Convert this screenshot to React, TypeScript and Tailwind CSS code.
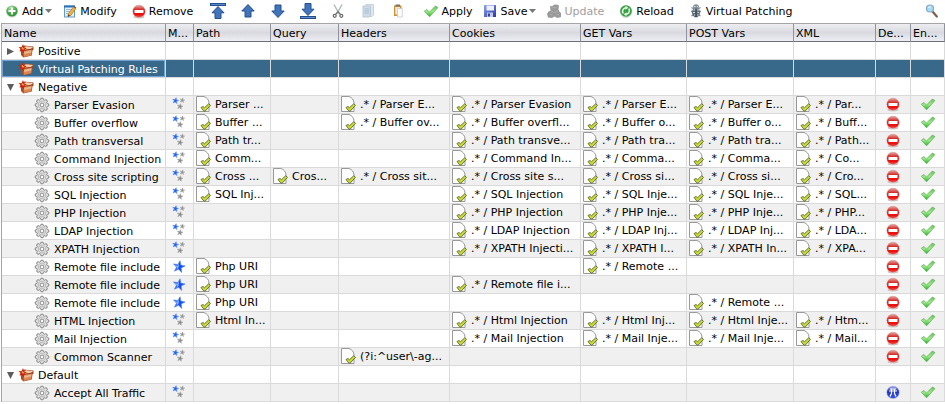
import type { ReactNode } from 'react';

/* ---------- icons ---------- */

function AddIcon() {
  return (
    <svg className="size-4 shrink-0" viewBox="0 0 16 16" aria-hidden="true">
      <defs>
        <radialGradient id="add-fill" cx="40%" cy="20%" r="85%">
          <stop offset="0" stopColor="#b4e0ac" />
          <stop offset="0.5" stopColor="#4fb04f" />
          <stop offset="1" stopColor="#2b8a33" />
        </radialGradient>
      </defs>
      <circle cx="8" cy="8.6" r="6.2" fill="#dfe3df" />
      <circle cx="8" cy="8" r="5.6" fill="url(#add-fill)" />
      <path d="M7 4.500h2V7h2.500v2H9v2.500H7V9H4.500V7H7z" fill="#fff" />
    </svg>
  );
}

function ModifyIcon() {
  return (
    <svg className="size-4 shrink-0" viewBox="0 0 16 16" aria-hidden="true">
      <rect x="2.5" y="3" width="10" height="11" fill="#e4effa" stroke="#5f9bd0" />
      <path d="M2 3.500h11" stroke="#2f6fb5" strokeWidth="2" />
      <path d="M4 6.500h6M4 8.500h4M4 10.500h3" stroke="#9db9d6" />
      <path d="M11.500 4l2.300 1.600-5 6.800-2.800 1.200.4-3z" fill="#f2b53c" stroke="#a8742a" strokeWidth="0.7" />
      <path d="M6.300 11.500l1.600 1.200-2.200 1z" fill="#3a3024" />
      <path d="M11.500 4l2.300 1.600.6-1-2.200-1.600z" fill="#8a5a3c" />
    </svg>
  );
}

function StopIcon() {
  return (
    <svg className="size-4 shrink-0" viewBox="0 0 16 16" aria-hidden="true">
      <defs>
        <linearGradient id="stop-fill" x1="0" y1="0" x2="0" y2="1">
          <stop offset="0" stopColor="#e9a5a2" />
          <stop offset="0.35" stopColor="#d4302c" />
          <stop offset="0.75" stopColor="#ea0c0c" />
          <stop offset="1" stopColor="#f4584e" />
        </linearGradient>
      </defs>
      <ellipse cx="8" cy="13.8" rx="5.5" ry="1.6" fill="#c8c8c8" />
      <circle cx="8" cy="8.3" r="6.6" fill="#d3b3b1" />
      <circle cx="8" cy="8.3" r="6" fill="url(#stop-fill)" />
      <rect x="3.500" y="7" width="9" height="3" rx="0.5" fill="#fff" />
    </svg>
  );
}

function ArrowIcon({ down = false, bar = false }: { down?: boolean; bar?: boolean }) {
  return (
    <svg className={down ? 'size-4 shrink-0 rotate-180' : 'size-4 shrink-0'} viewBox="0 0 16 16" aria-hidden="true">
      {bar ? (
        <>
          <rect x="0.500" y="0.500" width="15" height="2" fill="#5a8acb" stroke="#234f8e" />
          <path d="M8 3.500l6 6.300h-3V15.500H5V9.800H2z" fill="#4274ba" stroke="#234f8e" strokeLinejoin="round" />
        </>
      ) : (
        <path d="M8 1.500l6.200 6.500H11v6H5V8H1.800z" fill="#4274ba" stroke="#234f8e" strokeLinejoin="round" />
      )}
    </svg>
  );
}

function CutIcon() {
  return (
    <svg className="size-4 shrink-0" viewBox="0 0 16 16" aria-hidden="true">
      <path d="M4 1.500l5.200 9.500M12 1.500L6.800 11" stroke="#b3baba" strokeWidth="1.500" />
      <circle cx="4.700" cy="12.800" r="1.500" fill="none" stroke="#666" strokeWidth="1.200" />
      <circle cx="11.300" cy="12.800" r="1.500" fill="none" stroke="#666" strokeWidth="1.200" />
      <path d="M5.500 11.500L8 8.500l2.500 3" fill="none" stroke="#777" strokeWidth="1.200" />
    </svg>
  );
}

function CopyIcon() {
  return (
    <svg className="size-4 shrink-0" viewBox="0 0 16 16" aria-hidden="true">
      <path d="M6 1.500h7.500V12L12 13.500H6z" fill="#dfe8ef" stroke="#c6d3dd" />
      <path d="M3 3h7.500v9.500L9 14H3z" fill="#cfdce6" stroke="#b9c9d5" />
      <path d="M4.500 5H9v6H4.500z" fill="#b9cddc" />
    </svg>
  );
}

function PasteIcon() {
  return (
    <svg className="size-4 shrink-0" viewBox="0 0 16 16" aria-hidden="true">
      <path d="M4 2.500h7.500V13H4z" fill="#cf9136" />
      <path d="M5.300 4h4.700v7.500H5.300z" fill="#f4ead8" />
      <rect x="5.500" y="1.500" width="4.500" height="2" fill="#7b7468" />
      <path d="M7.500 5.500h4.800V14H7.500z" fill="#fdfdfd" stroke="#c9c9c9" strokeWidth="0.800" />
    </svg>
  );
}

function CheckIcon() {
  return (
    <svg className="size-4 shrink-0" viewBox="0 0 16 16" aria-hidden="true">
      <defs>
        <linearGradient id="check-fill" x1="0" y1="0" x2="0" y2="1">
          <stop offset="0" stopColor="#62c455" />
          <stop offset="0.500" stopColor="#9aec86" />
          <stop offset="1" stopColor="#22b020" />
        </linearGradient>
      </defs>
      <path
        d="M1.300 8.200L3.800 6.500 6.500 9 12.500 3 14.900 4.600 6.600 13.800z"
        fill="url(#check-fill)"
        stroke="#63a85c"
        strokeWidth="0.700"
        strokeLinejoin="round"
      />
    </svg>
  );
}

function SaveIcon() {
  return (
    <svg className="size-4 shrink-0" viewBox="0 0 16 16" aria-hidden="true">
      <defs>
        <linearGradient id="save-fill" x1="0" y1="0" x2="1" y2="1">
          <stop offset="0" stopColor="#8ba3ee" />
          <stop offset="1" stopColor="#2a35a8" />
        </linearGradient>
      </defs>
      <rect x="2" y="2" width="12" height="12" rx="0.500" fill="url(#save-fill)" />
      <rect x="4.500" y="2.500" width="7.500" height="5" fill="#eef1fb" />
      <rect x="5" y="9.500" width="6" height="4.500" fill="#c4cbe8" />
      <rect x="6" y="10.500" width="2" height="3" fill="#3542a5" />
    </svg>
  );
}

function UpdateIcon() {
  return (
    <svg className="size-4 shrink-0" viewBox="0 0 16 16" aria-hidden="true">
      <path
        d="M4 3l2 .3L8.500 1.500l3 .3L13 2.500l-.500 4 .800 2L15 10v4l-3.500 1L8.500 13.500 6 15l-4-.500L1 11l1.500-2.500 2-.8z"
        fill="#999"
      />
      <path d="M6.500 4.500l4.500.3M5 8.500l3.500 1 3-1M4 11.500l2.500.6M10.500 11.500l2.500.3" stroke="#aeaeae" fill="none" />
    </svg>
  );
}

function ReloadIcon() {
  return (
    <svg className="size-4 shrink-0" viewBox="0 0 16 16" aria-hidden="true">
      <circle cx="8" cy="8.600" r="6.300" fill="#d3d8d3" />
      <circle cx="8" cy="8" r="5.800" fill="#35a045" />
      <path d="M5.300 10.500C3.600 8 5 5 8 4.800" fill="none" stroke="#e6f7e4" strokeWidth="1.500" />
      <path d="M10.700 5.500C12.400 8 11 11 8 11.200" fill="none" stroke="#e6f7e4" strokeWidth="1.500" />
      <path d="M7.500 2.800l2.800 2-2.800 2zM8.500 13.200l-2.800-2 2.800-2z" fill="#e6f7e4" />
    </svg>
  );
}

function PatchIcon() {
  return (
    <svg className="size-4 shrink-0" viewBox="0 0 16 16" aria-hidden="true">
      <path
        d="M3.500 4.500L6 6M12.500 4.500L10 6M3 8.500h2.500M13 8.500h-2.500M3.500 13L6 11.500M12.500 13L10 11.500"
        stroke="#7d8a91"
        strokeWidth="1.300"
      />
      <ellipse cx="8" cy="9.500" rx="4" ry="5" fill="#5f6f77" />
      <ellipse cx="8" cy="3.800" rx="3" ry="2.500" fill="#83939a" />
      <path d="M6 3.500h1.500M9 3.500h1M5.500 7h2M9 7h2M5 9.500h2M9.500 9.500h1.500M6 12h1.500M9 12h1.500" stroke="#cfd8dc" />
      <path d="M8 5.500v8.500" stroke="#323d43" />
    </svg>
  );
}

function SearchIcon() {
  return (
    <svg className="size-4 shrink-0" viewBox="0 0 16 16" aria-hidden="true">
      <path d="M10.500 8.500l4.300 5" stroke="#80604c" strokeWidth="2.200" strokeLinecap="round" />
      <circle cx="8" cy="5.500" r="3.500" fill="#a8dcf6" stroke="#84a9c4" strokeWidth="1.200" />
      <path d="M6.500 5a2 2 0 0 1 2-1.300" stroke="#fff" fill="none" />
    </svg>
  );
}

function PackageIcon() {
  return (
    <svg className="size-4 shrink-0" viewBox="0 0 16 16" aria-hidden="true">
      <path d="M2.500 4.500L6 2.500l9.500 1v3.300l-1 .5-.7 5.200-8.300 2L3 12z" fill="#a94c28" />
      <path d="M5.500 7.800l8.500-1.300-.7 5.700-7.500 1.800z" fill="#d98653" />
      <path d="M6.200 8.800l7-1.200-.2 1.800-6.700 1.500z" fill="#eeb78a" />
      <path d="M5.200 5.200L8 3.300l7 .6-1.800 1.800-7.500 1.400z" fill="#f2cfae" />
      <path d="M5.500 7.500l9.500-1.500" stroke="#8e3b1c" strokeWidth="0.700" />
      <path d="M.5 4l3 .3L5 1l1 3.200L8.800 5.600 6.300 7l-.5 3.500L4 8 1.500 8.500l1-2.500z" fill="#cb2416" />
      <path d="M3.200 5l1.500-1 .8 1.300 1.300.5-1.800.9z" fill="#f6a33a" />
    </svg>
  );
}

function GearIcon() {
  return (
    <svg className="size-4 shrink-0" viewBox="0 0 16 16" aria-hidden="true">
      <g fill="#dcdcdc" stroke="#858585">
        <circle cx="8" cy="2.700" r="1.600" />
        <circle cx="11.700" cy="4.300" r="1.600" />
        <circle cx="13.300" cy="8" r="1.600" />
        <circle cx="11.700" cy="11.700" r="1.600" />
        <circle cx="8" cy="13.300" r="1.600" />
        <circle cx="4.300" cy="11.700" r="1.600" />
        <circle cx="2.700" cy="8" r="1.600" />
        <circle cx="4.300" cy="4.300" r="1.600" />
      </g>
      <circle cx="8" cy="8" r="5" fill="#e6e6e6" />
      <circle cx="8" cy="8" r="3.800" fill="none" stroke="#b0b0b0" strokeWidth="0.800" />
      <circle cx="8" cy="8" r="1.900" fill="#fafafa" stroke="#8a8a8a" />
    </svg>
  );
}

const STAR = 'M0-5L1.300-1.600 4.900-1.500 2 .7 3.100 4.300 0 2.200-3.100 4.300-2 .7-4.900-1.500-1.300-1.600z';

function MatchAnyIcon() {
  return (
    <svg className="block size-4" viewBox="0 0 16 16" role="img" aria-label="Any match">
      <g strokeWidth="1">
        <path d={STAR} transform="translate(4.500 4.700) rotate(12) scale(.6)" fill="#1f62f5" stroke="#5b8cf5" />
        <path d={STAR} transform="translate(11.300 4.300) rotate(12) scale(.5)" fill="#8f8f8f" stroke="#b0b0b0" />
        <path d={STAR} transform="translate(9 10.500) rotate(12) scale(.58)" fill="#8a8a8a" stroke="#a8a8a8" />
      </g>
    </svg>
  );
}

function MatchAllIcon() {
  return (
    <svg className="block size-4" viewBox="0 0 16 16" role="img" aria-label="All match">
      <path d={STAR} transform="translate(8 8.700) rotate(10) scale(1.200)" fill="#1550ee" stroke="#5a86e6" strokeWidth="0.500" />
      <path d="M8.200 4.500L6.800 7.500 3.500 7.200l2.600 2.200-.9 2.800 2.300-2.400z" fill="#86b4ff" />
    </svg>
  );
}

function DocIcon() {
  return (
    <svg className="h-4 w-[15px] shrink-0" viewBox="0 0 15 16" aria-hidden="true">
      <path d="M.5.500h7.500C11 1.500 13 4 13 7v8.500H.5z" fill="#fdfdfd" stroke="#999" />
      <path
        d="M5 11.500l2-1 1.500 1.200 4.200-3.900 1.800 1.500-5.200 5.700L8 15.300z"
        fill="#c9dc30"
        stroke="#5d6a3a"
        strokeWidth="0.900"
        strokeLinejoin="round"
      />
    </svg>
  );
}

function AcceptIcon() {
  return (
    <svg className="size-4 shrink-0" viewBox="0 0 16 16" aria-hidden="true">
      <defs>
        <linearGradient id="accept-fill" x1="0" y1="0" x2="0" y2="1">
          <stop offset="0" stopColor="#a5aee4" />
          <stop offset="0.400" stopColor="#1d32c8" />
          <stop offset="1" stopColor="#3a55ea" />
        </linearGradient>
      </defs>
      <circle cx="8" cy="8.300" r="6.600" fill="#b4b9d8" />
      <circle cx="8" cy="8.300" r="6" fill="url(#accept-fill)" />
      <path d="M4 7h8M5 5h6M6.500 4.500v5L5 12.500M9.500 4.500v5l1.500 3" fill="none" stroke="#fff" strokeWidth="1.200" />
    </svg>
  );
}

function Caret() {
  return (
    <svg className="ml-0.5 h-1 w-[7px] shrink-0" viewBox="0 0 7 4" aria-hidden="true">
      <path d="M0 0h7L3.500 4z" fill="#777" />
    </svg>
  );
}

/* ---------- toolbar ---------- */

type ToolProps = {
  icon: ReactNode;
  label: string;
  text?: boolean;
  menu?: boolean;
  tight?: boolean;
  disabled?: boolean;
};

function Tool({ icon, label, text = false, menu = false, tight = false, disabled = false }: ToolProps) {
  return (
    <button
      type="button"
      disabled={disabled}
      aria-label={text ? undefined : label}
      className={`flex h-[22px] shrink-0 items-center pl-[7px] whitespace-nowrap disabled:text-[#a0a0a0] ${
        menu || tight ? 'pr-[3px]' : 'pr-[7px]'
      }`}
    >
      {icon}
      {text && <span className="ml-0.5">{label}</span>}
      {menu && <Caret />}
    </button>
  );
}

function Toolbar() {
  return (
    <div className="flex h-[23px] items-start">
      <div className="-ml-[3px] flex">
        <Tool icon={<AddIcon />} label="Add" text menu />
        <Tool icon={<ModifyIcon />} label="Modify" text />
        <Tool icon={<StopIcon />} label="Remove" text />
      </div>
      <div className="ml-[3px] flex">
        <Tool icon={<ArrowIcon bar />} label="Move to top" />
        <Tool icon={<ArrowIcon />} label="Move up" />
        <Tool icon={<ArrowIcon down />} label="Move down" />
        <Tool icon={<ArrowIcon down bar />} label="Move to bottom" />
        <Tool icon={<CutIcon />} label="Cut" />
        <Tool icon={<CopyIcon />} label="Copy" />
        <Tool icon={<PasteIcon />} label="Paste" />
      </div>
      <div className="ml-[3px] flex">
        <Tool icon={<CheckIcon />} label="Apply" text tight />
        <Tool icon={<SaveIcon />} label="Save" text menu />
        <Tool icon={<UpdateIcon />} label="Update" text disabled />
        <Tool icon={<ReloadIcon />} label="Reload" text />
        <Tool icon={<PatchIcon />} label="Virtual Patching" text />
      </div>
      <div className="ml-auto flex">
        <Tool icon={<SearchIcon />} label="Search" />
      </div>
    </div>
  );
}

/* ---------- table ---------- */

type Row = {
  name: string;
  group?: 'open' | 'closed' | 'empty';
  selected?: boolean;
  match?: 'any' | 'all';
  vars?: string[];
  decision?: 'deny' | 'accept';
};

const rule = (name: string, vars: string[], match: 'any' | 'all' = 'any'): Row => ({
  name,
  vars,
  match,
  decision: 'deny',
});

const rows: Row[] = [
  { name: 'Positive', group: 'closed' },
  { name: 'Virtual Patching Rules', group: 'empty', selected: true },
  { name: 'Negative', group: 'open' },
  rule('Parser Evasion', ['Parser ...', '', '.* / Parser E...', '.* / Parser Evasion', '.* / Parser E...', '.* / Parser E...', '.* / Par...']),
  rule('Buffer overflow', ['Buffer ...', '', '.* / Buffer ov...', '.* / Buffer overfl...', '.* / Buffer o...', '.* / Buffer o...', '.* / Buff...']),
  rule('Path transversal', ['Path tr...', '', '', '.* / Path transve...', '.* / Path tra...', '.* / Path tra...', '.* / Path...']),
  rule('Command Injection', ['Comm...', '', '', '.* / Command In...', '.* / Comma...', '.* / Comma...', '.* / Co...']),
  rule('Cross site scripting', ['Cross ...', 'Cros...', '.* / Cross sit...', '.* / Cross site s...', '.* / Cross si...', '.* / Cross si...', '.* / Cro...']),
  rule('SQL Injection', ['SQL Inj...', '', '', '.* / SQL Injection', '.* / SQL Inje...', '.* / SQL Inje...', '.* / SQL...']),
  rule('PHP Injection', ['', '', '', '.* / PHP Injection', '.* / PHP Inje...', '.* / PHP Inje...', '.* / PHP...']),
  rule('LDAP Injection', ['', '', '', '.* / LDAP Injection', '.* / LDAP Inj...', '.* / LDAP Inj...', '.* / LDA...']),
  rule('XPATH Injection', ['', '', '', '.* / XPATH Injecti...', '.* / XPATH I...', '.* / XPATH In...', '.* / XPA...']),
  rule('Remote file include', ['Php URI', '', '', '', '.* / Remote ...', '', ''], 'all'),
  rule('Remote file include', ['Php URI', '', '', '.* / Remote file i...', '', '', ''], 'all'),
  rule('Remote file include', ['Php URI', '', '', '', '', '.* / Remote ...', ''], 'all'),
  rule('HTML Injection', ['Html In...', '', '', '.* / Html Injection', '.* / Html Inj...', '.* / Html Inje...', '.* / Htm...']),
  rule('Mail Injection', ['', '', '', '.* / Mail Injection', '.* / Mail Inje...', '.* / Mail Inje...', '.* / Mail...']),
  rule('Common Scanner', ['', '', '(?i:^user\\-ag...', '', '', '', '']),
  { name: 'Default', group: 'open' },
  { name: 'Accept All Traffic', match: 'any', decision: 'accept' },
];

const headers = ['Name', 'M...', 'Path', 'Query', 'Headers', 'Cookies', 'GET Vars', 'POST Vars', 'XML', 'De...', 'En...'];

function Disclosure({ state }: { state: 'open' | 'closed' | 'empty' }) {
  return (
    <span className="flex h-4 w-4 shrink-0 items-center justify-center">
      {state !== 'empty' && (
        <svg className={state === 'open' ? 'size-[7px] rotate-90' : 'size-[7px]'} viewBox="0 0 7 7" aria-hidden="true">
          <path d="M0 0L7 3.500 0 7z" fill="#5c5c5c" />
        </svg>
      )}
    </span>
  );
}

const cell = 'h-[18px] overflow-hidden border-r border-b border-[#dadada] p-0 whitespace-nowrap';

function RuleRow({ row }: { row: Row }) {
  const vars = row.vars ?? ['', '', '', '', '', '', ''];
  return (
    <tr
      aria-selected={row.selected}
      className={row.selected ? 'bg-[#39698a] text-white' : 'odd:bg-white even:bg-[#f0f0f0]'}
    >
      <td className={cell}>
        <div
          className={`flex h-[17px] items-start pt-px ${
            row.selected ? 'outline outline-1 -outline-offset-1 outline-[#6ea2d8]' : ''
          }`}
        >
          {row.group ? (
            <>
              <Disclosure state={row.group} />
              <PackageIcon />
            </>
          ) : (
            <span className="ml-8 flex">
              <GearIcon />
            </span>
          )}
          <span className="ml-1">{row.name}</span>
        </div>
      </td>
      <td className={cell}>
        {row.match && (
          <div className="ml-[5px] h-[17px]">{row.match === 'any' ? <MatchAnyIcon /> : <MatchAllIcon />}</div>
        )}
      </td>
      {vars.map((text, i) => (
        <td key={i} className={cell}>
          {text && (
            <div className="flex h-[17px] items-start pl-0.5">
              <DocIcon />
              <span className="ml-1">{text}</span>
            </div>
          )}
        </td>
      ))}
      <td className={cell}>
        {row.decision && (
          <div className="flex h-[17px] justify-center" role="img" aria-label={row.decision}>
            {row.decision === 'deny' ? <StopIcon /> : <AcceptIcon />}
          </div>
        )}
      </td>
      <td className={cell}>
        {row.decision && (
          <div className="flex h-[17px] justify-center" role="img" aria-label="enabled">
            <CheckIcon />
          </div>
        )}
      </td>
    </tr>
  );
}

export default function App() {
  return (
    <div className="min-h-screen bg-white font-['DejaVu_Sans',sans-serif] text-[11px] leading-[17px] text-black">
      <Toolbar />
      <div className="ml-px border-t border-l border-[#a5a5a5]">
        <table className="w-full table-fixed border-separate border-spacing-0">
          <colgroup>
            <col className="w-[164px]" />
            <col className="w-[28px]" />
            <col className="w-[77px]" />
            <col className="w-[68px]" />
            <col className="w-[111px]" />
            <col className="w-[131px]" />
            <col className="w-[106px]" />
            <col className="w-[107px]" />
            <col className="w-[82px]" />
            <col className="w-[35px]" />
            <col className="w-[34px]" />
          </colgroup>
          <thead>
            <tr>
              {headers.map((h) => (
                <th
                  key={h}
                  scope="col"
                  className="h-[18px] overflow-hidden border-r border-b border-r-[#8f949b] border-b-[#6b7078] bg-linear-to-b from-[#eeeef1] via-[#d9dae0] to-[#eceef3] p-0 pl-0.5 text-left font-normal whitespace-nowrap"
                >
                  <div className="h-[17px] leading-[19px]">{h}</div>
                </th>
              ))}
            </tr>
          </thead>
          <tbody>
            {rows.map((row, i) => (
              <RuleRow key={i} row={row} />
            ))}
          </tbody>
        </table>
      </div>
    </div>
  );
}
